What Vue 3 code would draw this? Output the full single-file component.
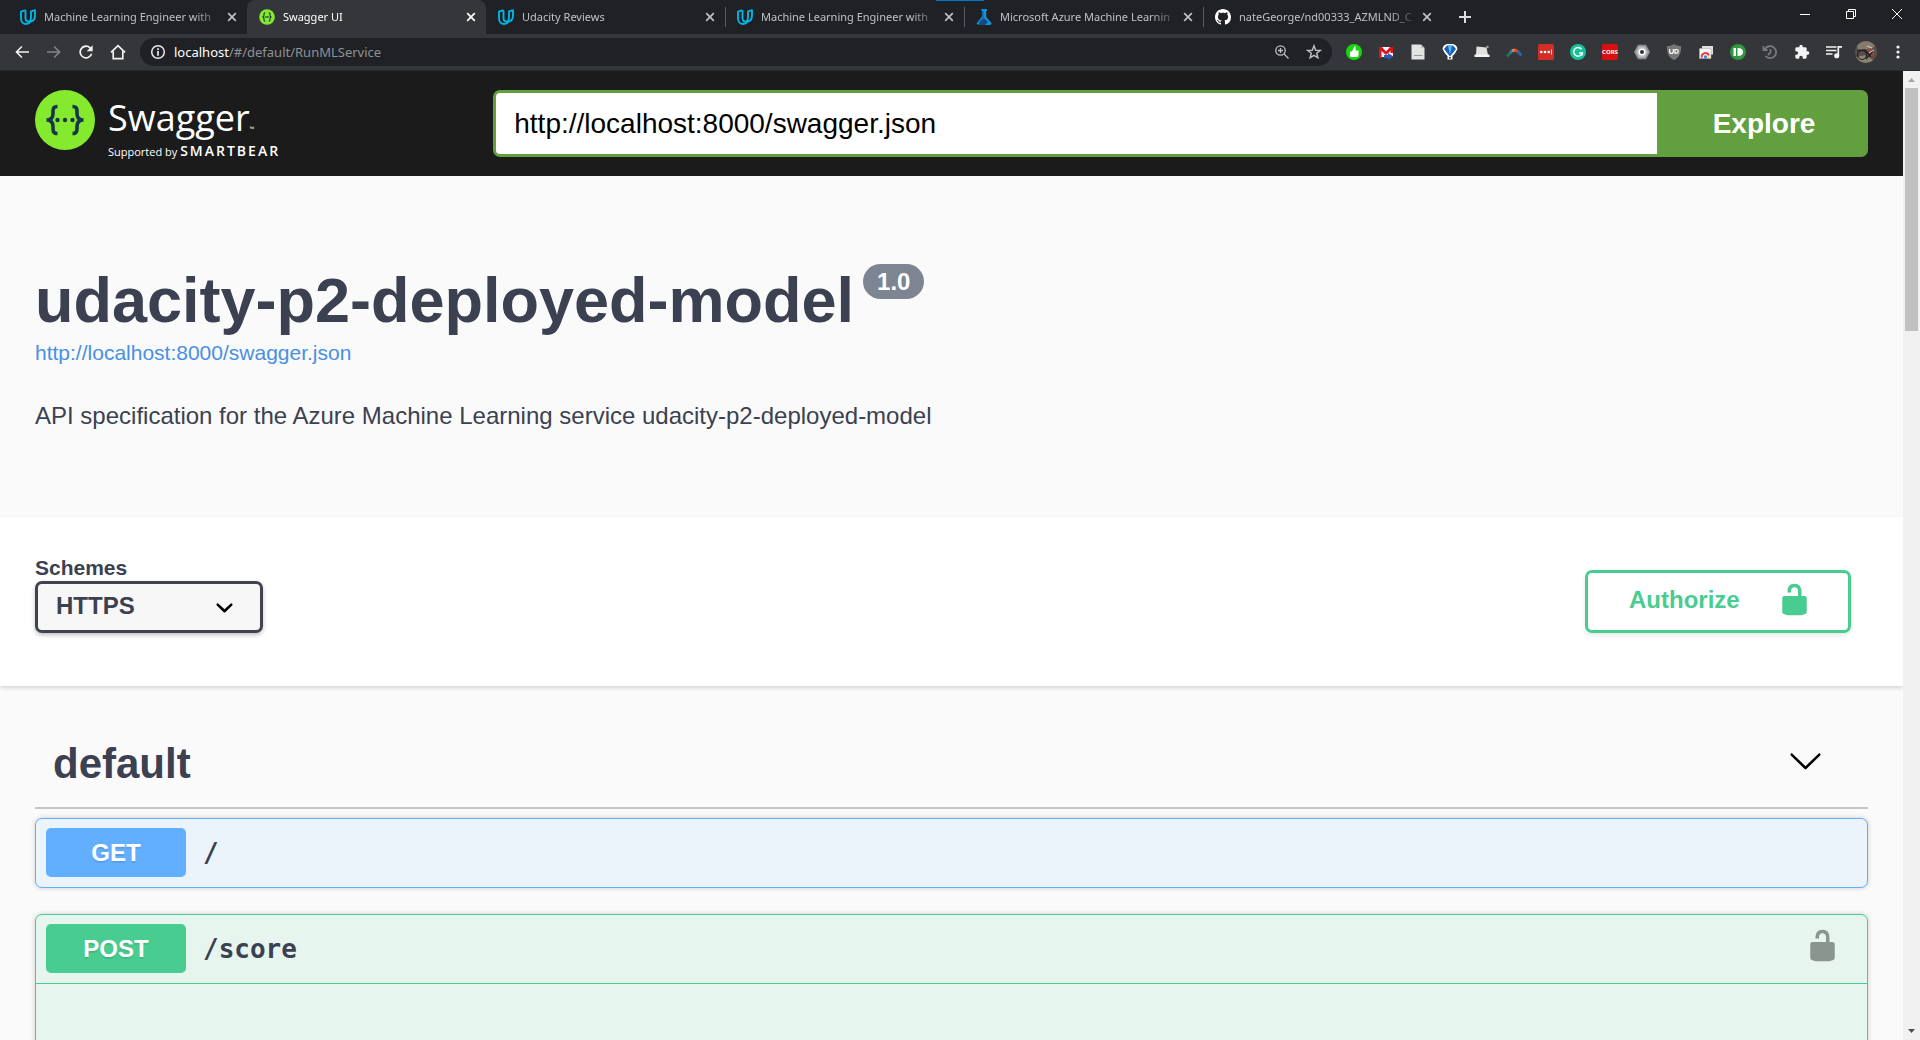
<script setup>
import { ref } from 'vue'

const tabs = [
  { icon: 'udacity', title: 'Machine Learning Engineer with' },
  { icon: 'swagger', title: 'Swagger UI', active: true },
  { icon: 'udacity', title: 'Udacity Reviews' },
  { icon: 'udacity', title: 'Machine Learning Engineer with', divider: true },
  { icon: 'azure', title: 'Microsoft Azure Machine Learnin', divider: true },
  { icon: 'github', title: 'nateGeorge/nd00333_AZMLND_C', divider: true },
]

const specUrl = ref('http://localhost:8000/swagger.json')
const scheme = ref('https')

const lockPath =
  'M15.8 8H14V5.6C14 2.703 12.665 1 10 1 7.334 1 6 2.703 6 5.6V6h2v-.801C8 3.754 8.797 3 10 3c1.203 0 2 .754 2 2.199V8H4c-.553 0-1 .646-1 1.199V17c0 .549.428 1.139.951 1.307l1.197.387C5.672 18.861 6.55 19 7.1 19h5.8c.549 0 1.428-.139 1.951-.307l1.196-.387c.524-.167.953-.757.953-1.306V9.199C17 8.646 16.352 8 15.8 8z'
</script>

<template>
  <div class="browser">
    <header class="chrome">
      <div class="tabstrip">
        <div class="progress"></div>
        <div v-for="(tab, i) in tabs" :key="i" class="tab" :class="{ active: tab.active, divider: tab.divider }">
          <svg v-if="tab.icon === 'udacity'" class="favicon" viewBox="0 0 16 16" fill="none" stroke="#02b3e4" stroke-width="1.9" stroke-linejoin="round">
            <path d="M5.500 1.200L1 2.600V9.500C1 13 3.300 15 6.100 15C8 15 9.400 14.300 10.300 13.200" />
            <path d="M5.500 1.200V9C5.500 11.400 6.800 12.700 8.800 12.700C12.500 12.700 15 10.400 15 6.500V1.200L11 2.400V8.500C11 10.600 10.300 12 9 12.700" />
          </svg>
          <svg v-else-if="tab.icon === 'swagger'" class="favicon" viewBox="0 0 16 16">
            <circle cx="8" cy="8" r="7.800" fill="#85ea2d" />
            <g fill="none" stroke="#173647" stroke-width="1.100">
              <path d="M6.300 3.800C4.600 3.800 5 5.300 5 6.300C5 7.300 4.500 8 3.400 8C4.500 8 5 8.700 5 9.700C5 10.700 4.600 12.200 6.300 12.200" />
              <path d="M9.700 3.800C11.400 3.800 11 5.300 11 6.300C11 7.300 11.500 8 12.600 8C11.500 8 11 8.700 11 9.700C11 10.700 11.400 12.200 9.700 12.200" />
              <path d="M5.800 8H10.200" />
            </g>
          </svg>
          <svg v-else-if="tab.icon === 'azure'" class="favicon" viewBox="0 0 16 16">
            <path d="M5.500 0H11V2H10.200V8L15.800 14.200L14.200 16H2L.600 14.200L6.300 7V2H5.500Z" fill="#1490df" />
            <path d="M6.300 2H8V9L3.800 12.600L.600 14.200L6.300 7Z" fill="#1d6fb0" />
            <path d="M3.800 12.700L8 9.300L12 13L9 16H2Z" fill="#134a80" />
          </svg>
          <svg v-else class="favicon" viewBox="0 0 16 16" fill="#fff">
            <path d="M8 0C3.580 0 0 3.580 0 8c0 3.540 2.290 6.530 5.470 7.590.4.070.550-.170.550-.380 0-.190-.010-.820-.010-1.490-2.010.370-2.530-.490-2.690-.940-.090-.230-.480-.940-.820-1.130-.280-.150-.680-.520-.010-.530.630-.010 1.080.580 1.230.820.720 1.210 1.870.870 2.330.660.070-.520.280-.870.510-1.070-1.780-.2-3.640-.890-3.640-3.950 0-.870.310-1.590.820-2.150-.080-.2-.360-1.020.080-2.120 0 0 .670-.210 2.200.820.640-.180 1.320-.270 2-.270s1.360.090 2 .270c1.530-1.040 2.200-.820 2.200-.820.440 1.100.160 1.920.080 2.120.510.560.820 1.270.820 2.150 0 3.070-1.870 3.750-3.650 3.950.290.250.540.730.540 1.480 0 1.070-.010 1.930-.010 2.200 0 .210.150.460.550.380A8.010 8.010 0 0 0 16 8c0-4.420-3.580-8-8-8z" />
          </svg>
          <span class="tab-title">{{ tab.title }}</span>
          <button class="tab-close" aria-label="Close tab">
            <svg viewBox="0 0 16 16"><path d="M4.200 4.200L11.800 11.800M11.800 4.200L4.200 11.800" fill="none" stroke="currentColor" stroke-width="1.700" /></svg>
          </button>
        </div>
        <button class="new-tab" aria-label="New tab">
          <svg viewBox="0 0 16 16"><path d="M8 2V14M2 8H14" fill="none" stroke="currentColor" stroke-width="2" /></svg>
        </button>
        <div class="window-controls">
          <button aria-label="Minimize"><svg viewBox="0 0 10 10"><path d="M0 5.500H10" /></svg></button>
          <button aria-label="Restore"><svg viewBox="0 0 10 10"><path d="M.5 2.500H7.500V9.500H.5ZM2.500 2.500V.5H9.500V7.500H7.500" /></svg></button>
          <button aria-label="Close"><svg viewBox="0 0 10 10"><path d="M0 0L10 10M10 0L0 10" /></svg></button>
        </div>
      </div>

      <div class="toolbar">
        <nav class="nav-buttons">
          <button aria-label="Back"><svg viewBox="0 0 24 24" fill="#f1f3f4"><path d="M22.500 10.800H6.400l6.200-6.200L11 3 2 12l9 9 1.600-1.600-6.200-6.200H22.500z" /></svg></button>
          <button aria-label="Forward"><svg viewBox="0 0 24 24" fill="#83858a"><path d="M1.500 10.800H17.600l-6.200-6.200L13 3l9 9-9 9-1.600-1.600 6.200-6.200H1.500z" /></svg></button>
          <button aria-label="Reload"><svg viewBox="0 0 24 24" fill="#f1f3f4"><path d="M19.100 4.900A10 10 0 1 0 21.700 14.500H19A7.400 7.400 0 1 1 17.200 6.800L13 11H22V2Z" /></svg></button>
          <button aria-label="Home"><svg viewBox="0 0 24 24" fill="none" stroke="#f1f3f4" stroke-width="2.500"><path d="M1.500 12.500L12 2.500L22.500 12.500M4.800 11V22H19.200V11" /></svg></button>
        </nav>
        <div class="omnibox">
          <svg viewBox="0 0 16 16" fill="none" stroke="#e8eaed"><circle cx="8" cy="8" r="6.300" stroke-width="1.500" /><path d="M8 7V11.700M8 4.200V6" stroke-width="1.700" /></svg>
          <div class="address"><b>localhost</b>/#/default/RunMLService</div>
          <svg viewBox="0 0 16 16" fill="none" stroke="#bdc1c6" stroke-width="1.300"><circle cx="6.500" cy="6.500" r="4.700" /><path d="M10 10L14.500 14.500M6.500 4V9M4 6.500H9" /></svg>
          <svg viewBox="0 0 16 16" fill="none" stroke="#bdc1c6" stroke-width="1.400"><path d="M8 1.800L9.700 6.200L14.300 6.400L10.700 9.300L11.900 13.800L8 11.300L4.100 13.800L5.300 9.300L1.700 6.400L6.300 6.200Z" /></svg>
        </div>
        <div class="extensions">
          <svg viewBox="0 0 16 16"><circle cx="8" cy="8" r="8" fill="#16d60e" /><path d="M4 7.500H6L8 3.500V2.500H9.500V6.500H12.500V11L11.500 13H6L4 12.500Z" fill="#fff" /></svg>
          <svg viewBox="0 0 16 16"><path d="M1 3H15V13H1Z" fill="#f5f5f5" /><path d="M1 3H4L8 7.500L12 3H15V9H12.500V7L8 11L3.500 7V14H1Z" fill="#d9151b" /><path d="M6 11H10V9L15.500 12.500L10 16V14H6Z" fill="#2c5cab" /></svg>
          <svg viewBox="0 0 16 16"><path d="M1.500 .5H11L14.500 4V15.500H1.500Z" fill="#e3e3e3" /><path d="M11 .5V4H14.500" fill="#bdbdbd" /><path d="M4 11.500H12.500" stroke="#999" /></svg>
          <svg viewBox="0 0 16 16"><path d="M5 0H11Q15 1 15.500 5L13 9.500L10.500 12V15.500H5.500V12L3 9.500L.5 5Q1 1 5 0Z" fill="#fff" /><path d="M5 1.500H11L14 5L8 12.500L2 5Z" fill="#1560b8" /><path d="M6 2H10L8 10.500Z" fill="#55b9f4" /><path d="M7 13H9V14.500H7Z" fill="#444" /></svg>
          <svg viewBox="0 0 16 16"><path d="M2.500 2.500L12.500 3.500L14 11H2Z" fill="#e1e1e1" /><path d="M.5 10.500H15.500V13H.5Z" fill="#f4f4f4" /><circle cx="13.500" cy="3" r="1.200" fill="#aaa" /></svg>
          <svg viewBox="0 0 16 16" fill="none" stroke-width="3"><path d="M.8 12.500L4.500 8.500" stroke="#187a55" /><path d="M4 9L7 6" stroke="#3b74b8" /><path d="M6.500 6.800L9 5.800" stroke="#f5a21b" /><path d="M8.500 5.800L12 7.800" stroke="#df4937" /><path d="M12 7.500L15.500 11.500" stroke="#2769a8" /></svg>
          <svg viewBox="0 0 16 16"><rect width="16" height="16" rx="1.500" fill="#d32d27" /><g fill="#fff"><circle cx="3.300" cy="8" r="1.300" /><circle cx="7" cy="8" r="1.300" /><circle cx="10.700" cy="8" r="1.300" /><path d="M13.200 5.500H14V10.500H13.200Z" /></g></svg>
          <svg viewBox="0 0 16 16"><circle cx="8" cy="8" r="8" fill="#15c39a" /><path d="M11.500 5.300A4.300 4.300 0 1 0 12.200 9H9" fill="none" stroke="#fff" stroke-width="1.500" /><path d="M12.400 8.300V11.500" stroke="#fff" /></svg>
          <span class="cors">CORS</span>
          <svg viewBox="0 0 16 16"><path d="M4 .8H12L16 8L12 15.200H4L0 8Z" fill="#8d9093" /><path d="M5 2.500H11L14 8L11 13.500H5L2 8Z" fill="#b9bbbd" /><circle cx="8" cy="8" r="3.500" fill="#fff" /><circle cx="8" cy="8" r="2" fill="#303134" /></svg>
          <svg viewBox="0 0 16 16"><path d="M8 0C10 1.500 12.500 2 15 2C15.300 9 13.500 13.500 8 16C2.500 13.500 .7 9 1 2C3.500 2 6 1.500 8 0Z" fill="#777" /><path d="M3.700 5V7.500Q3.700 9.500 5.500 9.500Q7.300 9.500 7.300 7.500V5M9 5.500H10.500Q12.300 5.500 12.300 7.300Q12.300 9.200 10.500 9.200H9Z" fill="none" stroke="#fff" stroke-width="1.200" /></svg>
          <svg viewBox="0 0 16 16"><path d="M4 2H15V10.500H4Z" fill="#dedede" /><path d="M1.500 4.500H13V14.500H1.500Z" fill="#f5f5f5" stroke="#aaa" stroke-width=".5" /><path d="M3.800 13A3.600 3.600 0 0 1 10.800 11.500" fill="none" stroke="#ea4335" stroke-width="2" /><path d="M3 11.500L5 14.500H3Z" fill="#4caf50" /><path d="M10.500 11.500L10 14.500H12Z" fill="#fbc02d" /><circle cx="7.500" cy="13" r="1.700" fill="#4285f4" /></svg>
          <svg viewBox="0 0 16 16"><circle cx="8" cy="8" r="8" fill="#2f9740" /><path d="M3.500 4H6V12H3.500Z" fill="#fff" /><path d="M7.500 4H9Q13 4.500 13 8Q13 11.500 9 12H7.500Z" fill="#fff" /></svg>
          <svg viewBox="0 0 16 16" fill="none" stroke="#77797c" stroke-width="1.800"><path d="M3 5A6 6 0 1 1 3.500 12M1.500 2V6H5.500M8.500 5V8.500L6 11" /></svg>
          <svg viewBox="0 0 24 24" fill="#f1f3f4"><path d="M20.500 11H19V7c0-1.100-.9-2-2-2h-4V3.500a2.500 2.500 0 0 0-5 0V5H4c-1.100 0-2 .9-2 2v3.800h1.500a2.700 2.700 0 0 1 0 5.400H2V20c0 1.100.9 2 2 2h3.800v-1.500a2.700 2.700 0 0 1 5.400 0V22H17c1.100 0 2-.9 2-2v-4h1.500a2.500 2.500 0 0 0 0-5z" /></svg>
          <svg viewBox="0 0 16 16" fill="none" stroke="#f1f3f4" stroke-width="1.700"><path d="M0 3H10.500M0 6.500H10.500M0 10H6.500M12.300 12V2.800H16" /><circle cx="10.700" cy="11.800" r="1.700" fill="#f1f3f4" /></svg>
          <svg class="avatar" viewBox="0 0 22 22">
            <circle cx="11" cy="11" r="11" fill="#57514a" /><path d="M2 5A11 11 0 0 1 20 5L15 9L3 8Z" fill="#857c6e" />
            <path d="M1 16A11 11 0 0 0 18 19L11 14Z" fill="#8b8570" /><path d="M12 8L16 7L20 12L16 17L13 12Z" fill="#8f4a3e" />
            <g fill="none" stroke="#1d1e22" stroke-width="1.200"><circle cx="7" cy="14" r="4.500" /><path d="M2 10L10 9L16 16M11 18L18 10" /></g><path d="M12 5L17 7M14 12L19 9" stroke="#d8d3c8" />
          </svg>
          <svg viewBox="0 0 16 16" fill="#f1f3f4"><circle cx="8" cy="3" r="1.600" /><circle cx="8" cy="8" r="1.600" /><circle cx="8" cy="13" r="1.600" /></svg>
        </div>
      </div>
    </header>

    <div class="viewport">
      <div class="swagger-ui">
        <div class="topbar">
          <a class="logo" href="#" aria-label="Swagger">
            <svg viewBox="0 0 60 60">
              <circle cx="30" cy="30" r="30" fill="#85ea2d" />
              <g fill="none" stroke="#173647" stroke-width="3.600">
                <path d="M22.500 16.500C17.500 16.500 18 20 18 23.500C18 27.500 16.500 30 11.500 30C16.500 30 18 32.500 18 36.500C18 40 17.500 43.500 22.500 43.500" />
                <path d="M37.500 16.500C42.500 16.500 42 20 42 23.500C42 27.500 43.500 30 48.500 30C43.500 30 42 32.500 42 36.500C42 40 42.500 43.500 37.500 43.500" />
              </g>
              <g fill="#173647"><circle cx="22.500" cy="30" r="2.200" /><circle cx="30" cy="30" r="2.200" /><circle cx="37.500" cy="30" r="2.200" /></g>
            </svg>
            <span class="wordmark">
              <span class="word">Swagger<small>™</small></span>
              <span class="support">Supported by <b>SMARTBEAR</b></span>
            </span>
          </a>
          <form class="spec-form" @submit.prevent>
            <input v-model="specUrl" type="text" aria-label="Specification URL" />
            <button type="submit">Explore</button>
          </form>
        </div>

        <section class="info">
          <div class="title-row">
            <h1>udacity-p2-deployed-model</h1>
            <span class="version">1.0</span>
          </div>
          <a class="spec-link" href="#">http://localhost:8000/swagger.json</a>
          <p>API specification for the Azure Machine Learning service udacity-p2-deployed-model</p>
        </section>

        <section class="schemes">
          <div class="scheme-field">
            <label for="scheme">Schemes</label>
            <div class="select-box">
              <select id="scheme" v-model="scheme"><option value="https">HTTPS</option></select>
              <svg viewBox="0 0 20 20"><path d="M13.418 7.859a.695.695 0 0 1 .978 0 .68.68 0 0 1 0 .969l-3.908 3.830a.697.697 0 0 1-.979 0l-3.908-3.830a.68.68 0 0 1 0-.969.695.695 0 0 1 .978 0L10 11l3.418-3.141z" /></svg>
            </div>
          </div>
          <button class="authorize">
            <span>Authorize</span>
            <svg viewBox="0 0 20 20"><path :d="lockPath" /></svg>
          </button>
        </section>

        <section class="operations">
          <header class="tag">
            <h2>default</h2>
            <button aria-label="Collapse section">
              <svg viewBox="0 0 20 20"><path d="M17.418 6.109c.272-.268.709-.268.979 0s.271.701 0 .969l-7.908 7.830c-.27.268-.707.268-.979 0l-7.908-7.830c-.27-.268-.27-.701 0-.969.271-.268.709-.268.979 0L10 13.250l7.418-7.141z" /></svg>
            </button>
          </header>
          <article class="opblock get">
            <div class="summary"><span class="method">GET</span><span class="path">/</span></div>
          </article>
          <article class="opblock post open">
            <div class="summary">
              <span class="method">POST</span><span class="path">/score</span>
              <button class="lock" aria-label="Authorization"><svg viewBox="0 0 20 20"><path :d="lockPath" /></svg></button>
            </div>
            <div class="op-body"></div>
          </article>
        </section>
      </div>

      <div class="scrollbar">
        <svg viewBox="0 0 17 17"><path d="M5 11L8.500 7L12 11Z" fill="#a3a3a3" /></svg>
        <div class="track"><div class="thumb"></div></div>
        <svg viewBox="0 0 17 17"><path d="M5 6L8.500 10L12 6Z" fill="#505050" /></svg>
      </div>
    </div>
  </div>
</template>

<style>
body {
  margin: 0;
  overflow: hidden;
}
</style>

<style scoped>
* {
  box-sizing: border-box;
}
.browser {
  display: flex;
  flex-direction: column;
  height: 100vh;
  overflow: hidden;
  font-family: "Liberation Sans", Arial, sans-serif;
  color: #3b4151;
}
svg {
  display: block;
  flex: none;
}
button {
  padding: 0;
  border: 0;
  background: none;
  color: inherit;
  font: inherit;
}
h1,
h2,
p {
  margin: 0;
}

/* browser frame */
.chrome {
  flex: none;
  background: #35363a;
  border-bottom: 1px solid #29282a;
  font-family: "Noto Sans", "Open Sans", sans-serif;
}
.tabstrip {
  position: relative;
  display: flex;
  height: 34px;
  padding-left: 8px;
  background: #202124;
}
.progress {
  position: absolute;
  top: 0;
  left: 936px;
  width: 48px;
  height: 1px;
  background: #0078d7;
}
.tab {
  display: flex;
  align-items: center;
  width: 239px;
  padding: 0 7px 0 12px;
  color: #bdc1c6;
  font-size: 11px;
}
.tab.active {
  border-radius: 8px 8px 0 0;
  background: #35363a;
  color: #fff;
}
.tab.divider {
  background: linear-gradient(#5a5c60, #5a5c60) left center / 1px 20px no-repeat;
}
.favicon {
  width: 16px;
  height: 16px;
}
.tab-title {
  flex: 1;
  margin-left: 8px;
  padding-bottom: 2px;
  white-space: nowrap;
  mask-image: linear-gradient(to right, #000 150px, transparent 180px);
}
.tab-close svg,
.new-tab svg {
  width: 16px;
  height: 16px;
}
.tab-close {
  margin-left: 4px;
}
.new-tab {
  margin-left: 15px;
  color: #dadce0;
}
.window-controls {
  display: flex;
  gap: 36px;
  height: 28px;
  margin-left: auto;
  padding-right: 18px;
}
.window-controls svg {
  width: 10px;
  height: 10px;
  fill: none;
  stroke: #fff;
}
.toolbar {
  display: flex;
  align-items: center;
  height: 36px;
  padding: 0 12px 0 14px;
}
.nav-buttons {
  display: flex;
  gap: 16px;
}
.nav-buttons svg {
  width: 16px;
  height: 16px;
}
.omnibox {
  display: flex;
  flex: 1;
  align-items: center;
  gap: 16px;
  height: 28px;
  margin: 0 14px;
  padding: 0 10px;
  border-radius: 14px;
  background: #202124;
}
.omnibox svg,
.extensions svg {
  width: 16px;
  height: 16px;
}
.address {
  flex: 1;
  margin-left: -8px;
  color: #8f9296;
  font-size: 13px;
}
.address b {
  color: #fff;
  font-weight: 400;
}
.extensions {
  display: flex;
  align-items: center;
  gap: 16px;
}
.extensions .avatar {
  width: 22px;
  height: 22px;
  margin: 0 -3px;
}
.extensions svg:last-child {
  margin-right: 2px;
}
.cors {
  width: 16px;
  border-radius: 2px;
  background: #d91010;
  color: #fff;
  font: 700 6px/16px "Open Sans", sans-serif;
  text-align: center;
}

/* page */
.viewport {
  display: flex;
  flex: 1;
  min-height: 0;
}
.swagger-ui {
  flex: 1;
  overflow: hidden;
  background: #fafafa;
}
.scrollbar {
  display: flex;
  flex-direction: column;
  width: 17px;
  background: #f1f1f1;
}
.scrollbar svg {
  width: 17px;
  height: 17px;
}
.track {
  flex: 1;
  padding: 0 2px;
}
.thumb {
  height: 26%;
  background: #c1c1c1;
}
.topbar {
  display: flex;
  padding: 19px 35px 14px;
  background: #1b1b1b;
}
.logo {
  display: flex;
  flex: 1;
  gap: 13px;
  color: #fff;
  text-decoration: none;
  font-family: "Open Sans", "Noto Sans", sans-serif;
}
.logo > svg {
  width: 60px;
  height: 60px;
}
.wordmark {
  display: flex;
  flex-direction: column;
}
.word {
  padding-top: 5px;
  font-size: 36px;
  line-height: 46px;
}
.word small {
  font-size: 6px;
  line-height: 6px;
}
.support {
  font-size: 11px;
  line-height: 20px;
  white-space: nowrap;
}
.support b {
  font-size: 14px;
  font-weight: 600;
  letter-spacing: 2px;
}
.spec-form {
  display: flex;
  flex: 3;
  height: 67px;
}
.spec-form input {
  flex: 1;
  min-width: 0;
  padding: 0 18px;
  border: 3px solid #62a03f;
  border-right: 0;
  border-radius: 7px 0 0 7px;
  outline: 0;
  background: #fff;
  color: #000;
  font: 28px "Liberation Sans", Arial, sans-serif;
}
.spec-form button {
  width: 211px;
  padding-left: 3px;
  border-radius: 0 7px 7px 0;
  background: #62a03f;
  color: #fff;
  font-size: 28px;
  font-weight: 700;
}
.info {
  padding: 88px 35px 87px;
}
.title-row {
  display: flex;
  align-items: flex-start;
  gap: 9px;
}
h1 {
  font-size: 63px;
  line-height: 72px;
}
.version {
  padding: 0 14px;
  border-radius: 18px;
  background: #7d8492;
  color: #fff;
  font-size: 24px;
  font-weight: 700;
  line-height: 35px;
}
.spec-link {
  display: block;
  width: fit-content;
  margin: 5px 0 37px;
  color: #4990e2;
  font-size: 21px;
  line-height: 24px;
  text-decoration: none;
}
.info p {
  font-size: 24px;
  line-height: 28px;
}
.schemes {
  display: flex;
  align-items: flex-end;
  justify-content: space-between;
  padding: 39px 52px 53px 35px;
  background: #fff;
  box-shadow: 0 2px 4px rgba(0, 0, 0, 0.15);
}
.scheme-field label {
  display: block;
  margin-bottom: 1px;
  font-size: 21px;
  font-weight: 700;
  line-height: 24px;
}
.select-box {
  display: grid;
  align-items: center;
  width: 228px;
}
.select-box > * {
  grid-area: 1 / 1;
}
.select-box svg {
  justify-self: end;
  width: 35px;
  height: 35px;
  margin-right: 21px;
  pointer-events: none;
}
select {
  height: 52px;
  padding: 0 18px 4px;
  border: 3px solid #41444e;
  border-radius: 7px;
  background: #f7f7f7;
  box-shadow: 0 2px 4px rgba(0, 0, 0, 0.25);
  color: #3b4151;
  font: 700 24px "Liberation Sans", Arial, sans-serif;
  appearance: none;
}
.authorize {
  display: flex;
  align-items: center;
  justify-content: space-between;
  width: 266px;
  height: 63px;
  padding: 0 36px 4px 41px;
  border: 3px solid #49cc90;
  border-radius: 7px;
  box-shadow: 0 2px 4px rgba(0, 0, 0, 0.1);
  color: #49cc90;
  font-size: 24px;
  font-weight: 700;
}
.authorize svg,
.tag svg,
.lock svg {
  width: 35px;
  height: 35px;
  fill: currentColor;
}
.operations {
  padding: 36px 35px 0;
}
.tag {
  display: flex;
  align-items: center;
  justify-content: space-between;
  margin-bottom: 9px;
  padding: 18px 45px 19px 18px;
  border-bottom: 2px solid #c5c5cb;
}
.tag h2 {
  font-size: 42px;
  line-height: 48px;
}
.tag button,
.lock {
  padding-bottom: 7px;
}
.tag button {
  color: #000;
}
.opblock {
  margin-bottom: 26px;
  border: 1px solid;
  border-radius: 7px;
  box-shadow: 0 0 5px rgba(0, 0, 0, 0.19);
}
.get {
  border-color: #61affe;
  background: #ebf3fb;
}
.post {
  border-color: #49cc90;
  background: #e6f5ee;
}
.summary {
  display: flex;
  align-items: center;
  padding: 9px 27px 10px 10px;
}
.open .summary {
  border-bottom: 1px solid #49cc90;
}
.method {
  width: 140px;
  border-radius: 5px;
  background: #61affe;
  color: #fff;
  font-size: 24px;
  font-weight: 700;
  line-height: 49px;
  text-align: center;
  text-shadow: 0 2px 0 rgba(0, 0, 0, 0.1);
}
.post .method {
  background: #49cc90;
}
.path {
  flex: 1;
  margin-left: 17px;
  font: 700 26px/30px "DejaVu Sans Mono", monospace;
}
.lock {
  color: #8b9590;
}
.op-body {
  height: 400px;
}
</style>
